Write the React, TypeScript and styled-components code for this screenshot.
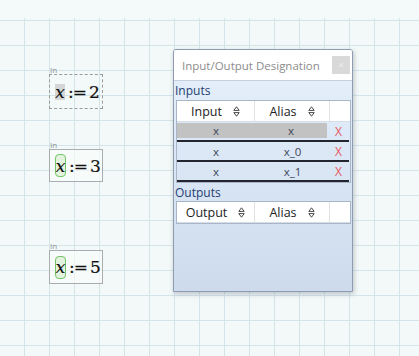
import React from "react";
import styled, { createGlobalStyle } from "styled-components";

const Global = createGlobalStyle`
  html, body { margin: 0; padding: 0; }
  body {
    width: 419px;
    height: 356px;
    overflow: hidden;
    background: #f4faf9;
    font-family: "Open Sans", "Noto Sans", sans-serif;
  }
`;

const Page = styled.div`
  position: relative;
  width: 419px;
  height: 356px;
  display: flex;
  flex-direction: column;
  background: #f4faf9;
  overflow: hidden;
`;

const TopStrip = styled.div`
  height: 18px;
  flex: none;
`;

const Sheet = styled.div`
  flex: 1;
  background-color: #f3f9f8;
  background-image: linear-gradient(to right, #d4e5ea 1px, transparent 1px),
    linear-gradient(to bottom, #d4e5ea 1px, transparent 1px);
  background-size: 25px 25px;
  background-position: 24px 2px;
`;

const Region = styled.div<{ $left: number; $top: number }>`
  position: absolute;
  left: ${(p) => p.$left}px;
  top: ${(p) => p.$top}px;
  display: flex;
  flex-direction: column;
  align-items: flex-start;
`;

const RegionLabel = styled.div`
  font-family: "Open Sans", sans-serif;
  font-size: 8px;
  line-height: 8px;
  color: #8a8f94;
  padding-left: 1px;
`;

const MathBox = styled.div<{ $dashed?: boolean; $height: number }>`
  box-sizing: border-box;
  width: 54px;
  height: ${(p) => p.$height}px;
  border: 1px ${(p) => (p.$dashed ? "dashed #9a9a9a" : "solid #a9adb0")};
  display: flex;
  align-items: center;
  padding-left: 5px;
  font-family: "DejaVu Serif", "Liberation Serif", serif;
  font-size: 17px;
  color: #111;
  -webkit-text-stroke: 0.2px #111;
  background: ${(p) => (p.$dashed ? "transparent" : "rgba(250,252,252,0.6)")};
`;

const Var = styled.span<{ $mode: "selected" | "input" }>`
  box-sizing: border-box;
  display: inline-flex;
  align-items: center;
  justify-content: center;
  font-family: "DejaVu Serif", serif;
  font-style: italic;
  ${(p) =>
    p.$mode === "selected"
      ? `
    width: 10px;
    height: 16px;
    background: #d4d6d6;
  `
      : `
    width: 11px;
    height: 23px;
    border: 1.5px solid #74c46a;
    border-radius: 4px;
    background: #e4f3de;
  `}
`;

const Assign = styled.span`
  margin-left: 3px;
  letter-spacing: -1px;
`;

const Num = styled.span`
  margin-left: 3px;
`;

const Dialog = styled.div`
  position: absolute;
  left: 173px;
  top: 49px;
  width: 180px;
  height: 243px;
  box-sizing: border-box;
  border: 1px solid #8e9bb0;
  border-radius: 3px 3px 0 0;
  box-shadow: 1px 2px 5px rgba(60, 70, 90, 0.3);
  display: flex;
  flex-direction: column;
  overflow: hidden;
`;

const TitleBar = styled.div`
  height: 30px;
  flex: none;
  background: #ffffff;
  display: flex;
  align-items: center;
  justify-content: space-between;
  padding: 0 2px 0 8px;
  border-bottom: 1px solid #c4d0de;
`;

const Title = styled.span`
  font-size: 11.5px;
  color: #8c8c8c;
  white-space: nowrap;
`;

const CloseBtn = styled.div`
  width: 18px;
  height: 18px;
  background: #d9d9d9;
  color: #ececec;
  font-size: 10px;
  display: flex;
  align-items: center;
  justify-content: center;
`;

const Body = styled.div`
  flex: 1;
  background: linear-gradient(to bottom, #e3eefa, #cddbec);
  padding: 0 1px 0 2px;
  display: flex;
  flex-direction: column;
`;

const SectionLabel = styled.div<{ $h: number }>`
  font-size: 12px;
  height: ${(p) => p.$h}px;
  line-height: 17px;
  padding-top: 1px;
  box-sizing: border-box;
  color: #1f3d72;
  margin-left: -1px;
`;

const Table = styled.div`
  border: 1px solid #a9b6c8;
  display: flex;
  flex-direction: column;
`;

const Row = styled.div<{ $header?: boolean }>`
  display: grid;
  grid-template-columns: 78px 75px 1fr;
  height: ${(p) => (p.$header ? "21px" : "20px")};
  box-sizing: border-box;
  ${(p) =>
    p.$header
      ? "background: #ffffff; border-bottom: 1px solid #d6dde6;"
      : "border-bottom: 2px solid #23252f; margin-right: 1px;"}
`;

const HeadCell = styled.div<{ $last?: boolean }>`
  display: flex;
  align-items: center;
  justify-content: center;
  gap: 11px;
  font-size: 12.5px;
  color: #222;
  border-right: ${(p) => (p.$last ? "none" : "1px solid #e1e1e1")};
`;

const Cell = styled.div<{ $sel?: boolean; $trim?: boolean }>`
  display: flex;
  align-items: center;
  justify-content: center;
  font-size: 11.5px;
  color: #3b4658;
  ${(p) => (p.$sel ? "background: #c2c2c2; margin: 1px 0 3px 0;" : "")}
  ${(p) => (p.$trim ? "margin-right: 3px;" : "")}
`;

const Remove = styled.div`
  display: flex;
  align-items: center;
  justify-content: center;
  font-size: 12px;
  color: #e65862;
  padding-right: 2px;
`;

const SortIcon = () => (
  <svg width="7" height="11" viewBox="0 0 7 11" fill="none">
    <path d="M3.5 0.8 L6.2 4.4 H0.8 Z" stroke="#333" strokeWidth="0.9" strokeLinejoin="round" />
    <path d="M3.5 10.2 L6.2 6.6 H0.8 Z" stroke="#333" strokeWidth="0.9" strokeLinejoin="round" />
  </svg>
);

const Header = ({ first }: { first: string }) => (
  <Row $header>
    <HeadCell>
      {first}
      <SortIcon />
    </HeadCell>
    <HeadCell>
      Alias
      <SortIcon />
    </HeadCell>
    <HeadCell $last />
  </Row>
);

const inputs = [
  { input: "x", alias: "x", selected: true },
  { input: "x", alias: "x_0", selected: false },
  { input: "x", alias: "x_1", selected: false },
];

export default function App() {
  return (
    <Page>
      <Global />
      <TopStrip />
      <Sheet />

      <Region $left={49} $top={66}>
        <RegionLabel>In</RegionLabel>
        <MathBox $dashed $height={35}>
          <Var $mode="selected">x</Var>
          <Assign>:=</Assign>
          <Num>2</Num>
        </MathBox>
      </Region>

      <Region $left={49} $top={141}>
        <RegionLabel>In</RegionLabel>
        <MathBox $height={33}>
          <Var $mode="input">x</Var>
          <Assign>:=</Assign>
          <Num>3</Num>
        </MathBox>
      </Region>

      <Region $left={49} $top={242}>
        <RegionLabel>In</RegionLabel>
        <MathBox $height={34}>
          <Var $mode="input">x</Var>
          <Assign>:=</Assign>
          <Num>5</Num>
        </MathBox>
      </Region>

      <Dialog>
        <TitleBar>
          <Title>Input/Output Designation</Title>
          <CloseBtn>×</CloseBtn>
        </TitleBar>
        <Body>
          <SectionLabel $h={19}>Inputs</SectionLabel>
          <Table>
            <Header first="Input" />
            {inputs.map((r, i) => (
              <Row key={i}>
                <Cell $sel={r.selected}>{r.input}</Cell>
                <Cell $sel={r.selected} $trim={r.selected}>
                  {r.alias}
                </Cell>
                <Remove>X</Remove>
              </Row>
            ))}
          </Table>
          <SectionLabel $h={18}>Outputs</SectionLabel>
          <Table>
            <Header first="Output" />
          </Table>
        </Body>
      </Dialog>
    </Page>
  );
}
